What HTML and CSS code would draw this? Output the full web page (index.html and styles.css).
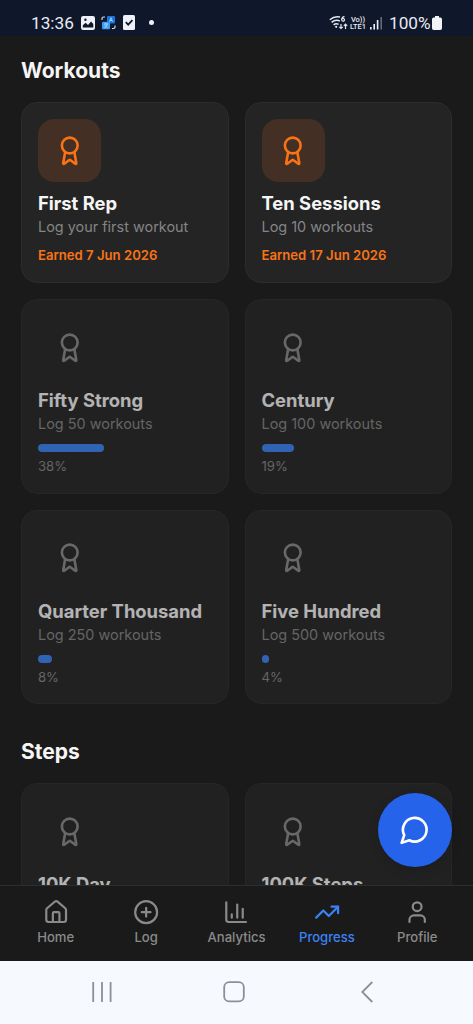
FILE: index.html
```html
<!DOCTYPE html>
<html lang="en">
<head>
<meta charset="utf-8">
<meta name="viewport" content="width=device-width, initial-scale=1">
<title>Progress</title>
<link rel="stylesheet" href="styles.css">
</head>
<body>
<svg class="defs" aria-hidden="true">
  <symbol id="award" viewBox="0 0 24 24"><path d="m15.477 12.89 1.515 8.526a.5.5 0 0 1-.81.47l-3.58-2.687a1 1 0 0 0-1.197 0l-3.586 2.686a.5.5 0 0 1-.81-.469l1.514-8.526"/><circle cx="12" cy="8" r="6"/></symbol>
</svg>
<div class="phone">
  <header class="status">
    <div class="status-left">
      <span class="clock">13:36</span>
      <svg class="s-photo" width="14" height="14" viewBox="0 0 14 14"><rect width="14" height="14" rx="2.2" fill="#eef1f8"/><path d="M1.8 11.5V9.2L4.6 6.8 7 9l3-3.6 2.3 2.5v3.6z" fill="#101828"/><circle cx="4.4" cy="3.8" r="1.2" fill="#101828"/></svg>
      <svg class="s-translate" width="15" height="14" viewBox="0 0 15 14"><rect x="6" y="0" width="8" height="7.5" rx="1" fill="#1976dc"/><rect x="1" y="5.8" width="8" height="7.5" rx="1" fill="#3b9cf3"/><path d="m8.4 5.7 1.6-4 1.6 4M9 4.5h2M3 8h4M5 7v1m1.5 0q-1 3-3.2 3.8M3.5 9l3 2.8" fill="none" stroke="#b9dcff" stroke-width=".8"/><path d="M1 4V2.4Q1 1 2.5 1H4M14 9.5V11q0 1.5-1.5 1.5H11" fill="none" stroke="#d8dde8" stroke-width="1.2"/></svg>
      <svg class="s-check" width="12" height="15" viewBox="0 0 12 15"><rect width="12" height="15" rx="1.5" fill="#eef1f8"/><path d="m2.8 7.2 2.4 2.4 4.2-4.5" fill="none" stroke="#101828" stroke-width="1.8"/></svg>
      <span class="dot"></span>
    </div>
    <div class="status-right">
      <svg class="s-wifi" width="19" height="16" viewBox="0 0 19 16" fill="none" stroke="#e3e7f0" stroke-width="1.5"><path d="M.8 4.8Q5.5.6 11 2M2.6 7.4Q6.5 4 10.8 6M4.6 9.8Q7 7.8 9.6 9.4"/><circle cx="7.2" cy="11.8" r="1.1" fill="#e3e7f0" stroke="none"/><path d="M15.5 1.6Q12.7 1.5 12.7 4.6M12.7 4.8a1.4 1.4 0 1 0 2.8 0 1.4 1.4 0 1 0-2.8 0M12 9v4.5m-1.7-1.7L12 13.5l1.7-1.7M16.5 14V9m-1.7 1.9 1.7-1.7 1.7 1.7" stroke-width="1.2"/></svg>
      <span class="volte"><span>Vo))</span><span>LTE1</span></span>
      <svg class="s-signal" width="13" height="14" viewBox="0 0 13 14" fill="#eef1f8"><rect x="0" y="11" width="1.6" height="2.5"/><rect x="3.4" y="8" width="1.6" height="5.5"/><rect x="6.8" y="4" width="1.6" height="9.5"/><rect x="10.4" y="1" width="1.6" height="12.5" opacity=".38"/></svg>
      <span class="percent">100%</span>
      <svg class="s-battery" width="10" height="14" viewBox="0 0 10 14"><path d="M3 0h4v1.5h1.3Q10 1.5 10 3.2v9.1q0 1.7-1.7 1.7H1.7Q0 14 0 12.3V3.2Q0 1.5 1.7 1.5H3z" fill="#f2f3f5"/></svg>
    </div>
  </header>

  <main class="content">
    <section>
      <h2>Workouts</h2>
      <div class="grid">
        <article class="card earned">
          <div class="tile"><svg><use href="#award"/></svg></div>
          <h3>First Rep</h3><p>Log your first workout</p><div class="date">Earned 7 Jun 2026</div>
        </article>
        <article class="card earned">
          <div class="tile"><svg><use href="#award"/></svg></div>
          <h3>Ten Sessions</h3><p>Log 10 workouts</p><div class="date">Earned 17 Jun 2026</div>
        </article>
        <article class="card locked">
          <div class="tile"><svg><use href="#award"/></svg></div>
          <h3>Fifty Strong</h3><p>Log 50 workouts</p><div class="track"><div class="bar" style="width:38%"></div></div><div class="pct">38%</div>
        </article>
        <article class="card locked">
          <div class="tile"><svg><use href="#award"/></svg></div>
          <h3>Century</h3><p>Log 100 workouts</p><div class="track"><div class="bar" style="width:19%"></div></div><div class="pct">19%</div>
        </article>
        <article class="card locked">
          <div class="tile"><svg><use href="#award"/></svg></div>
          <h3>Quarter Thousand</h3><p>Log 250 workouts</p><div class="track"><div class="bar" style="width:8%"></div></div><div class="pct">8%</div>
        </article>
        <article class="card locked">
          <div class="tile"><svg><use href="#award"/></svg></div>
          <h3>Five Hundred</h3><p>Log 500 workouts</p><div class="track"><div class="bar" style="width:4%"></div></div><div class="pct">4%</div>
        </article>
      </div>
    </section>
    <section>
      <h2>Steps</h2>
      <div class="grid">
        <article class="card locked">
          <div class="tile"><svg><use href="#award"/></svg></div>
          <h3>10K Day</h3>
        </article>
        <article class="card locked">
          <div class="tile"><svg><use href="#award"/></svg></div>
          <h3>100K Steps</h3>
        </article>
      </div>
    </section>
    <button class="fab" aria-label="Chat"><svg viewBox="0 0 24 24"><path d="M7.9 20A9 9 0 1 0 4 16.1L2 22Z"/></svg></button>
  </main>

  <nav class="tabs">
    <a class="tab"><svg viewBox="0 0 24 24"><path d="M15 21v-8a1 1 0 0 0-1-1h-4a1 1 0 0 0-1 1v8"/><path d="M3 10a2 2 0 0 1 .709-1.528l7-5.999a2 2 0 0 1 2.582 0l7 5.999A2 2 0 0 1 21 10v9a2 2 0 0 1-2 2H5a2 2 0 0 1-2-2z"/></svg><span>Home</span></a>
    <a class="tab"><svg viewBox="0 0 24 24"><circle cx="12" cy="12" r="10"/><path d="M8 12h8M12 8v8"/></svg><span>Log</span></a>
    <a class="tab"><svg viewBox="0 0 24 24"><path d="M3 3v16a2 2 0 0 0 2 2h16M18 17V9M13 17V5M8 17v-3"/></svg><span>Analytics</span></a>
    <a class="tab active"><svg viewBox="0 0 24 24"><path d="M16 7h6v6"/><path d="m22 7-8.5 8.5-5-5L2 17"/></svg><span>Progress</span></a>
    <a class="tab"><svg viewBox="0 0 24 24"><path d="M19 21v-2a4 4 0 0 0-4-4H9a4 4 0 0 0-4 4v2"/><circle cx="12" cy="7" r="4"/></svg><span>Profile</span></a>
  </nav>

  <footer class="system">
    <svg width="20" height="20" viewBox="0 0 20 20"><path d="M1.2 0v20M10 0v20M18.6 0v20"/></svg>
    <svg class="sys-home" width="22" height="22" viewBox="0 0 22 22"><rect x="1.2" y="1.2" width="19.6" height="19.2" rx="5"/></svg>
    <svg width="12" height="22" viewBox="0 0 12 22"><path d="M11.3 1 1.3 11l10 10"/></svg>
  </footer>
</div>
</body>
</html>
```

FILE: styles.css
```css
* { box-sizing: border-box; }
body { margin: 0; background: #1a1a1a; font-family: Inter, "Liberation Sans", sans-serif; }
h2, h3, p { margin: 0; }
.defs { display: none; }
.phone { width: 473px; height: 1024px; display: flex; flex-direction: column; overflow: hidden; background: #1a1a1a; }

.status { flex: none; height: 36px; padding: 9px 31px 0 31px; display: flex; justify-content: space-between; background: #0f172a; color: #e8ebf3; font-family: Roboto, sans-serif; }
.status-left, .status-right { display: flex; align-items: center; height: 27px; }
.clock { width: 50px; font-size: 17.2px; }
.s-translate { margin-left: 6px; }
.s-check { margin-left: 7px; }
.dot { width: 5px; height: 5px; margin-left: 14px; border-radius: 50%; background: #eef1f8; }
.volte { display: flex; flex-direction: column; align-items: center; width: 18px; margin-left: 1px; font-size: 7.5px; line-height: 7px; font-weight: 500; }
.s-signal { margin-left: 3px; }
.percent { width: 43px; margin-left: 6px; font-size: 17.2px; white-space: nowrap; }

.content { position: relative; flex: none; height: 849px; padding: 19px 21px 0; overflow: hidden; }
h2 { height: 32px; margin-bottom: 15px; line-height: 32px; font-size: 21px; font-weight: 700; color: #f5f5f5; }
section + section { margin-top: 32px; }
.grid { display: grid; grid-template-columns: 1fr 1fr; gap: 16px; }
.card { padding: 16px; border: 1px solid #2c2c2c; border-radius: 16px; background: #242424; }
.earned { height: 181px; }
.locked { height: 194.5px; opacity: .7; }
.tile { width: 63px; height: 63px; display: flex; align-items: center; justify-content: center; border-radius: 16px; }
.earned .tile { background: #432f23; color: #f97316; }
.locked .tile { color: #8a8a8a; }
.tile svg { width: 31.5px; height: 31.5px; }
svg { flex: none; }
.tile svg, .fab svg, .tab svg { fill: none; stroke: currentColor; stroke-width: 2; stroke-linecap: round; stroke-linejoin: round; }
h3 { height: 26px; margin-top: 8px; line-height: 26px; font-size: 18.4px; font-weight: 700; color: #f5f5f5; white-space: nowrap; }
p { height: 20px; margin-top: 1px; line-height: 20px; font-size: 14.45px; color: #858585; white-space: nowrap; }
.date { margin-top: 8px; line-height: 20px; font-size: 13.14px; font-weight: 600; color: #f97316; }
.track { height: 8px; margin-top: 10px; }
.bar { height: 8px; min-width: 7.5px; border-radius: 4px; background: #3b82f6; }
.pct { margin-top: 4px; line-height: 20px; font-size: 13.14px; color: #858585; }

.fab { position: absolute; right: 21px; bottom: 18px; width: 74px; height: 74px; padding: 0; display: flex; align-items: center; justify-content: center; border: 0; border-radius: 50%; background: #2563eb; color: #fff; box-shadow: 0 4px 12px rgba(0, 0, 0, .12); }
.fab svg { width: 31.5px; height: 31.5px; }

.tabs { flex: none; height: 76px; padding: 13px 10.5px 0; display: flex; border-top: 1px solid #2e2e2e; background: #1a1a1a; }
.tab { flex: 1; display: flex; flex-direction: column; align-items: center; color: #8a8a8a; font-size: 13.1px; font-weight: 500; line-height: 18px; }
.tab svg { width: 26.3px; height: 26.3px; margin-bottom: 3px; }
.active { color: #3b82f6; }

.system { flex: 1; display: flex; align-items: center; padding: 0 100px 1px 92px; background: #f6f9fe; }
.system svg { fill: none; stroke: #8c8f96; stroke-width: 1.8; }
.sys-home { margin: 0 auto 0 111px; }
```
